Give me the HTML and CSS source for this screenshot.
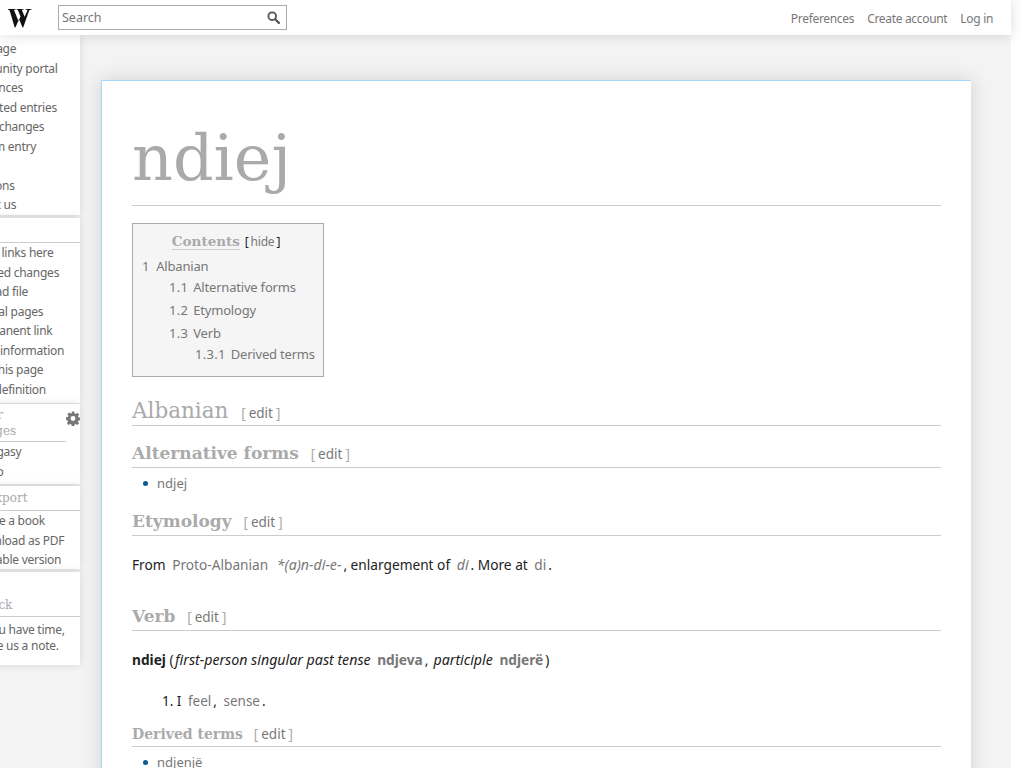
FILE: index.html
```html
<!DOCTYPE html>
<html lang="en">
<head>
<meta charset="utf-8">
<title>ndiej - Wiktionary</title>
<link rel="stylesheet" href="styles.css">
</head>
<body>
<div class="page">
  <header class="topbar">
    <a class="logo" aria-label="Wiktionary">
      <svg viewBox="0 0 25 20" width="25" height="20"><path fill="#111" d="M0 1h7.600v.8H5.900l4.600 11.400 2-4.600-2.700-6.800H8.600V1h7v.8h-1.800l2.800 7 2.700-6.100c.3-.6 0-.9-.8-.9h-.9V1h5.900v.8h-.8c-.8 0-1.300.4-1.700 1.200L15.200 19.600h-.7l-3.400-8.500-3.700 8.500h-.7L1.800 3C1.500 2.200 1.100 1.800.4 1.800H0z"/></svg>
    </a>
    <div class="search">
      <span>Search</span>
      <svg class="search-icon" viewBox="0 0 14 14" width="13" height="13"><circle cx="5.600" cy="5.600" r="4.100" fill="none" stroke="#555" stroke-width="2"/><path d="M8.800 8.800 L12.800 12.800" stroke="#555" stroke-width="2.400" stroke-linecap="round"/></svg>
    </div>
    <nav class="userlinks">
      <a>Preferences</a><a>Create account</a><a>Log in</a>
    </nav>
  </header>
  <div class="shell">
    <aside class="sidebar">
      <section class="box first">
        <ul>
          <li>Main page</li><li>Community portal</li><li>Preferences</li><li>Requested entries</li><li>Recent changes</li><li>Random entry</li><li>Help</li><li>Donations</li><li>Contact us</li>
        </ul>
      </section>
      <section class="box tools">
        <h3 class="muted">Tools</h3>
        <ul>
          <li>What links here</li><li>Related changes</li><li>Upload file</li><li>Special pages</li><li>Permanent link</li><li>Page information</li><li>Cite this page</li><li>Add definition</li>
        </ul>
      </section>
      <section class="box langs">
        <div class="langhead">
          <h3>In other languages</h3>
          <svg class="gear" viewBox="0 0 16 16" width="15" height="15"><path fill="#777" fill-rule="evenodd" d="M6.600 0h2.800l.4 2.200 1.300.6 1.900-1.300 2 2-1.300 1.900.6 1.300 2.200.4v2.800l-2.200.4-.6 1.300 1.300 1.900-2 2-1.900-1.300-1.300.6-.4 2.200H6.600l-.4-2.200-1.300-.6-1.900 1.300-2-2 1.300-1.900-.6-1.300L0 9.400V6.600l2.200-.4.6-1.300-1.300-1.900 2-2 1.900 1.300 1.300-.6zM8 5.200a2.800 2.800 0 1 0 0 5.600 2.800 2.800 0 0 0 0-5.600z"/></svg>
        </div>
        <ul>
          <li>Malagasy</li><li>Latino</li>
        </ul>
      </section>
      <section class="box export">
        <h3>Print/export</h3>
        <ul>
          <li>Create a book</li><li>Download as PDF</li><li>Printable version</li>
        </ul>
      </section>
      <section class="box feedback">
        <h3>Feedback</h3>
        <p>If you have time,<br>leave us a note.</p>
      </section>
    </aside>
    <main class="content">
      <article class="card">
        <h1>ndiej</h1>
        <div class="toc">
          <div class="toc-title"><span class="toc-label">Contents</span> <span class="toc-toggle">[<a>hide</a>]</span></div>
          <ul class="toc-l1">
            <li><a><b>1</b>Albanian</a>
              <ul class="toc-l2">
                <li><a><b>1.1</b>Alternative forms</a></li>
                <li><a><b>1.2</b>Etymology</a></li>
                <li><a><b>1.3</b>Verb</a>
                  <ul class="toc-l3">
                    <li><a><b>1.3.1</b>Derived terms</a></li>
                  </ul>
                </li>
              </ul>
            </li>
          </ul>
        </div>
        <h2>Albanian <span class="edit">[<a>edit</a>]</span></h2>
        <h3 class="sub">Alternative forms <span class="edit">[<a>edit</a>]</span></h3>
        <ul class="bullets"><li><a>ndjej</a></li></ul>
        <h3 class="sub etym">Etymology <span class="edit">[<a>edit</a>]</span></h3>
        <p class="para">From <a>Proto-Albanian</a> <a><i>*(a)n-di-e-</i></a>, enlargement of <a><i>di</i></a>. More at <a>di</a>.</p>
        <h3 class="sub verb">Verb <span class="edit">[<a>edit</a>]</span></h3>
        <p class="para head"><b>ndiej</b> (<i>first-person singular past tense</i> <a><b>ndjeva</b></a>, <i>participle</i> <a><b>ndjerë</b></a>)</p>
        <ol class="senses"><li>I <a>feel</a>, <a>sense</a>.</li></ol>
        <h4 class="sub4">Derived terms <span class="edit">[<a>edit</a>]</span></h4>
        <ul class="bullets"><li><a>ndjenjë</a></li></ul>
      </article>
    </main>
  </div>
</div>
</body>
</html>
```
FILE: styles.css
```css
html, body { margin: 0; padding: 0; background: #fff; height: 768px; overflow: hidden; }
body { font-family: "Noto Sans", "Open Sans", sans-serif; font-size: 13px; color: #222; }
ul, ol { margin: 0; padding: 0; }
li { list-style: none; }
a { color: #777; }

.page { width: 1011px; height: 768px; background: #f3f3f3; }

.topbar { position: relative; z-index: 2; display: flex; align-items: center; height: 35px; background: #fff; box-shadow: 0 0 14px rgba(0,0,0,.14); }
.logo { display: flex; align-items: center; width: 58px; padding-left: 8px; padding-top: 1px; box-sizing: border-box; }
.search { display: flex; align-items: center; justify-content: space-between; box-sizing: border-box; width: 229px; height: 25px; padding: 0 6px 0 3px; border: 1px solid #aaa; font-size: 12.5px; color: #777; }
.userlinks { margin-left: auto; display: flex; gap: 13px; padding: 1px 18px 0 0; font-size: 12px; letter-spacing: -.32px; }

.shell { display: flex; align-items: flex-start; height: 733px; overflow: hidden; }

.sidebar { flex: none; width: 160px; margin-left: -80px; }
.box { box-sizing: border-box; background: #fff; box-shadow: 0 0 8px rgba(0,0,0,.12); padding-left: 34px; }
.box li { font-size: 12px; letter-spacing: -.25px; line-height: 19.5px; color: #666; white-space: nowrap; }
.box h3 { margin: 0; font-family: "DejaVu Serif", serif; font-weight: normal; font-size: 12px; line-height: 24px; color: #aaa; border-bottom: 1px solid #ccc; white-space: nowrap; }
.box h3.muted { color: transparent; }
.box.first { padding-top: 4px; height: 180px; margin-bottom: 3px; }
.box ul { margin-left: 16px; }
.box.first ul { margin-left: 5px; }
.tools { height: 185px; margin-bottom: 1px; }
.tools ul, .langs ul { padding-top: .4px; }
.langs { height: 80px; margin-bottom: 2px; }
.langhead { display: flex; align-items: flex-start; }
.langhead h3 { box-sizing: border-box; width: 112px; height: 38px; padding-top: 3px; line-height: 16px; white-space: normal; }
.gear { flex: none; width: 14px; margin-top: 7px; }
.export { height: 83px; margin-bottom: 3px; }
.box.export h3 { padding-top: 1px; line-height: 23px; }
.feedback { padding-top: 23px; height: 93px; }
.box.feedback h3 { padding-bottom: 1px; line-height: 20px; }
.feedback p { margin: 5px 0 0 21px; font-size: 12px; letter-spacing: -.25px; line-height: 16px; color: #666; white-space: nowrap; }

.content { flex: none; width: 931px; box-sizing: border-box; padding: 45px 40px 0 21px; }
.card { background: #fff; border-top: 1px solid #a7d7f9; border-left: 1px solid #a7d7f9; padding: 30px; box-shadow: 0 0 18px rgba(0,0,0,.14); min-height: 900px; }

h1 { margin: 0; font-family: "DejaVu Serif", serif; font-weight: normal; font-size: 63.5px; line-height: 94px; color: #aaa; border-bottom: 1px solid #ccc; }

.toc { box-sizing: border-box; width: 192px; height: 154px; margin-top: 17px; background: #f5f5f5; border: 1px solid #aaa; padding: 8px 9px 0; font-size: 13px; letter-spacing: -.2px; white-space: nowrap; }
.toc-title { text-align: center; line-height: 18px; font-size: 12px; padding-right: 4px; }
.toc-label { font-family: "DejaVu Serif", serif; font-weight: bold; font-size: 13.5px; letter-spacing: 0; color: #aaa; border-bottom: 1px solid #ccc; margin-right: 2px; }
.toc-toggle { color: #222; }
.toc-toggle a { padding: 0 2px; }
.toc b { font-weight: normal; margin-right: 5px; letter-spacing: .3px; }
.toc-l1 > li > a > b { margin-right: 6.5px; }
.toc a { color: #777; }
.toc-l1 { margin-top: 5px; }
.toc-l1 > li { line-height: 20px; }
.toc-l2 { margin-left: 27px; margin-top: 0; }
.toc-l2 > li { line-height: 23px; }
.toc-l3 { margin-left: 26px; margin-top: -1px; }
.toc-l3 > li { line-height: 20px; }

h2 { margin: 20px 0 0; font-family: "DejaVu Serif", serif; font-weight: normal; font-size: 21.5px; line-height: 28px; color: #aaa; border-bottom: 1px solid #ccc; }
h2 .edit { line-height: 0; }
.edit { font-family: "Noto Sans", sans-serif; font-size: 13.5px; font-weight: normal; color: #aaa; margin-left: 6px; }
.edit a { color: #777; padding: 0 3px; }
.sub { margin: 14px 0 0; font-family: "DejaVu Serif", serif; font-weight: bold; font-size: 17px; line-height: 26px; color: #aaa; border-bottom: 1px solid #ccc; }
.sub.etym { margin-top: 15px; }
.sub.verb { margin-top: 28px; }
.sub4 { margin: 11px 0 0; font-family: "DejaVu Serif", serif; font-weight: bold; font-size: 14px; line-height: 23px; color: #aaa; border-bottom: 1px solid #ccc; }

.bullets { margin: 5px 0 0 25px; }
.bullets li { position: relative; line-height: 20px; font-size: 13px; }
.bullets li::before { content: ""; position: absolute; left: -14px; top: 8px; width: 5px; height: 5px; border-radius: 50%; background: #0a5a96; }

.para { margin: 18px 0 0; font-size: 13.7px; line-height: 21px; color: #222; }
.para i { font-size: 14.2px; line-height: 0; }
.para a { margin: 0 2px 0 3px; }
.para.head { margin-top: 18px; }
.head i { margin-left: 1.5px; }
.senses { margin: 21px 0 0 30px; font-size: 13.5px; line-height: 21px; }
.senses li { list-style: decimal inside; }
.senses a { margin: 0 2px 0 3px; }
```
